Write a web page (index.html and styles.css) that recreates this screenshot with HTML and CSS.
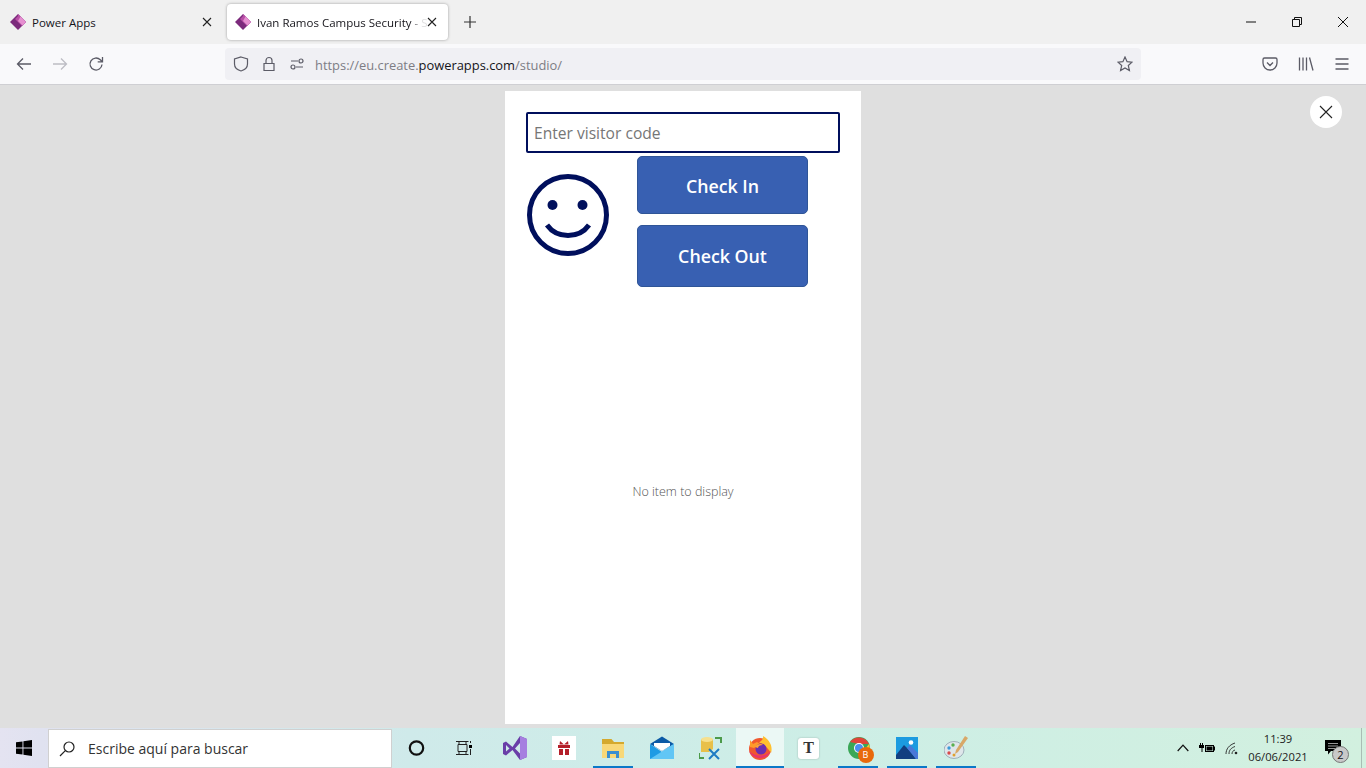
FILE: index.html
```html
<!DOCTYPE html>
<html lang="es">
<head>
  <meta charset="UTF-8">
  <title>Ivan Ramos Campus Security</title>
  <link rel="stylesheet" href="styles.css">
</head>
<body>
  <div class="tabstrip">
    <div class="tab">
      <svg class="favicon" viewBox="0 0 16 16"><path fill="#7c2a7c" d="M8 0 16 8 8 16 0 8z"/><path fill="#b84fa6" d="M8 0 16 8 12 12 5 5 8 2z"/><path fill="#e58fd0" d="M10.500 2.500 16 8 12.500 11.500 8 7z"/></svg>
      <span class="tab-title">Power Apps</span>
      <svg class="tab-close" viewBox="0 0 10 10"><path d="M1 1 9 9M9 1 1 9"/></svg>
    </div>
    <div class="tab active">
      <svg class="favicon" viewBox="0 0 16 16"><path fill="#7c2a7c" d="M8 0 16 8 8 16 0 8z"/><path fill="#b84fa6" d="M8 0 16 8 12 12 5 5 8 2z"/><path fill="#e58fd0" d="M10.500 2.500 16 8 12.500 11.500 8 7z"/></svg>
      <span class="tab-title">Ivan Ramos Campus Security - S</span>
      <svg class="tab-close" viewBox="0 0 10 10"><path d="M1 1 9 9M9 1 1 9"/></svg>
    </div>
    <svg class="new-tab" viewBox="0 0 12 12"><path d="M6 0V12M0 6H12"/></svg>
    <div class="window-controls">
      <div class="win-btn"><svg viewBox="0 0 10 10"><path d="M0 5H10"/></svg></div>
      <div class="win-btn"><svg viewBox="0 0 10 10"><path d="M.5 2.500H7.500V9.500H.5zM2.500 2.500V.5H9.500V7.500H7.500"/></svg></div>
      <div class="win-btn"><svg viewBox="0 0 10 10"><path d="M0 0 10 10M10 0 0 10"/></svg></div>
    </div>
  </div>

  <div class="toolbar">
    <svg class="tool first" viewBox="0 0 16 16"><path d="M15 8H1.500M7 2.500 1.500 8 7 13.500"/></svg>
    <svg class="tool off" viewBox="0 0 16 16"><path d="M1 8H14.500M9 2.500 14.500 8 9 13.500"/></svg>
    <svg class="tool" viewBox="0 0 16 16"><path d="M14 8.500A6 6 0 1 1 12.300 3.800L14 5.500M14.500 1V5.800H9.700"/></svg>
    <div class="urlbar">
      <svg class="url-icon" viewBox="0 0 16 16"><path d="M8 1 14.500 3V8C14.500 11.500 11.500 14 8 15 4.500 14 1.500 11.500 1.500 8V3z"/></svg>
      <svg class="url-icon" viewBox="0 0 16 16"><path d="M3 7.500H13V14.500H3zM5 7.500V4.500A3 3 0 0 1 11 4.500V7.500"/></svg>
      <svg class="url-icon" viewBox="0 0 16 16"><circle cx="12" cy="5" r="2"/><circle cx="4" cy="11" r="2"/><path d="M2 5H9M7 11H14"/></svg>
      <span class="url-text">https://eu.create.<b>powerapps.com</b>/studio/</span>
      <svg class="url-star" viewBox="0 0 16 16"><path d="M8 1 10.100 5.700 15 6.200 11.300 9.500 12.400 14.500 8 11.900 3.600 14.500 4.700 9.500 1 6.200 5.900 5.700z"/></svg>
    </div>
    <svg class="tool pocket" viewBox="0 0 16 16"><path d="M2.500 2H13.500A1.500 1.500 0 0 1 15 3.500V7A7 7 0 0 1 1 7V3.500A1.500 1.500 0 0 1 2.500 2zM5 6.500 8 9.500 11 6.500"/></svg>
    <svg class="tool" viewBox="0 0 16 16"><path d="M1.500 1.500V14.500M5 1.500V14.500M8.500 1.500V14.500M11.500 1.500 15 14.500"/></svg>
    <svg class="tool" viewBox="0 0 16 16"><path d="M1.500 3H14.500M1.500 8H14.500M1.500 13H14.500"/></svg>
  </div>

  <main class="stage">
    <div class="preview">
      <input class="visitor-code" type="text" placeholder="Enter visitor code">
      <div class="actions">
        <svg class="smiley" viewBox="0 0 82 82"><circle cx="41" cy="41" r="38.500"/><circle class="eye" cx="25.500" cy="31" r="5"/><circle class="eye" cx="55.500" cy="31" r="5"/><path d="M20 51C30 65 52 65 62 51"/></svg>
        <div class="buttons">
          <button class="btn check-in">Check In</button>
          <button class="btn check-out">Check Out</button>
        </div>
      </div>
      <div class="empty">No item to display</div>
    </div>
    <button class="close-preview"><svg viewBox="0 0 14 14"><path d="M1 1 13 13M13 1 1 13"/></svg></button>
  </main>

  <footer class="taskbar">
    <div class="start"><svg viewBox="0 0 16 16"><path fill="#000" d="M0 2.300 6.500 1.400V7.500H0zM7.400 1.300 16 0V7.500H7.400zM0 8.400H6.500V14.600L0 13.700zM7.400 8.400H16V16L7.400 14.700z"/></svg></div>
    <div class="search">
      <svg viewBox="0 0 16 16"><circle cx="10" cy="6" r="5"/><path d="M6.300 9.700 1 15"/></svg>
      <span>Escribe aquí para buscar</span>
    </div>
    <div class="slot"><svg class="ic18" viewBox="0 0 18 18"><circle cx="8.500" cy="9" r="6.700" fill="none" stroke="#111" stroke-width="2.200"/></svg></div>
    <div class="slot"><svg class="ic18 nudge" viewBox="0 0 18 18" fill="none" stroke="#222" stroke-width="1"><path d="M3 5.500H12V12.500H3zM1 2.500H13.500M1 15.500H13.500M4 13V16M11 13V16M4 2.500V5M11 2.500V5"/><path d="M15.500 2V4M15.500 10V16"/><path d="M15.500 6V9" stroke="#000" stroke-width="3"/></svg></div>
    <div class="slot"><svg class="ic24" viewBox="0 0 24 24"><path fill="#6a3ea8" d="M0 7 3 5.500 9.500 11 17 0 24 3V21L17 24 9.500 14 3 19.500 0 18zM3 9V15.500L6.500 12.500zM17 7 12 12.500 17 17.500z"/><path fill="#a67fe0" d="M17 0 24 3V21L17 24V17.500 7z"/></svg></div>
    <div class="slot"><svg class="ic24" viewBox="0 0 24 24"><path fill="#fff" d="M0 0H24V24H0z"/><path fill="#b4202a" d="M6 9H18V12H6zM7 13H11V19H7zM13 13H17V19H13zM8 5 12 8.500 16 5 16.500 8.500H7.500z"/></svg></div>
    <div class="slot running"><svg class="ic22" viewBox="0 0 22 22"><path fill="#d4a92e" d="M0 2H9.500L12 5H22V9H0z"/><path fill="#f8d878" d="M0 7H22V21H0z"/><path fill="#3a8fd0" d="M5 14H17V21H14V17H8V21H5z"/></svg></div>
    <div class="slot"><svg class="ic24" viewBox="0 0 24 24"><path fill="#0c5aa6" d="M0 8 12 .5 24 8 12 15z"/><path fill="#fff" d="M4 7H20V10L12 15 4 10z"/><path fill="#1f9be4" d="M0 8 12 16 24 8V23H0z"/><path fill="#62c6f5" d="M0 23 24 8V23z"/></svg></div>
    <div class="slot"><svg class="ic24" viewBox="0 0 24 24"><path fill="#e8c04a" d="M2 3H14V13L10 16H2z"/><ellipse cx="8" cy="3.500" rx="6" ry="2.500" fill="#f6e08e"/><path fill="none" stroke="#4c9a4a" stroke-width="2" d="M16 2H22V7M0 17V22H5"/><path fill="none" stroke="#1e7cc4" stroke-width="2" d="M10 13 20 23M20 13 10 23"/></svg></div>
    <div class="slot current"><svg class="ic24" viewBox="0 0 24 24"><circle cx="12" cy="13" r="11" fill="#f0582f"/><path fill="#ffc02e" d="M15 0C22 4 25 11 23 17 20 12 16 8 11 6.500 14 5 15.500 3 15 0z"/><path fill="#ff9a2a" d="M2 4 5 8 9 6 12 8 6 12 2 11z"/><circle cx="13" cy="13" r="5.500" fill="#6b2fb0"/><path fill="#ffa436" d="M7 11C9 8 13 7 15 9 12 9 10 10 10 12z"/><path fill="#e8346e" d="M1 15C5 24 19 25 23 15 18 21 7 21 1 15z"/></svg></div>
    <div class="slot"><span class="t-app">T</span></div>
    <div class="slot running"><span class="chrome"><svg class="ic22" viewBox="0 0 22 22"><circle cx="11" cy="11" r="11" fill="#3aa757"/><path fill="#e0443a" d="M2 5A11 11 0 0 1 21 7H11z"/><path fill="#f6c632" d="M21 7A11 11 0 0 1 13 22L17 12z"/><circle cx="11" cy="11" r="5" fill="#fff"/><circle cx="11" cy="11" r="4" fill="#4a8ef0"/></svg><b class="profile">B</b></span></div>
    <div class="slot running"><svg class="ic22" viewBox="0 0 22 22"><path fill="#1c9be0" d="M0 0H22V22H0z"/><path fill="#123f80" d="M0 22V18L8 8 14 14 20 22z"/><path fill="#4a78d8" d="M11 11 14 8 22 16V22H20z"/><circle cx="15" cy="5.500" r="2.300" fill="#fff"/></svg></div>
    <div class="slot running"><svg class="ic24" viewBox="0 0 24 24"><ellipse cx="10" cy="14" rx="10" ry="8.500" fill="#dfe6ea" stroke="#9fb0ba"/><circle cx="5" cy="12" r="1.700" fill="#3a9ad8"/><circle cx="9" cy="9" r="1.700" fill="#58b050"/><circle cx="5" cy="17" r="1.700" fill="#d84a4a"/><circle cx="10" cy="19" r="1.500" fill="#e0a030"/><path fill="#d8a868" d="M21 0 24 2 14 16 11 18 12 14z"/></svg></div>
    <div class="tray">
      <svg class="chevron" viewBox="0 0 12 8"><path d="M.7 7 6 1.200 11.300 7"/></svg>
      <svg class="battery" viewBox="0 0 16 12"><path fill="#000" d="M1 1H2V3H3V1H4V3H5V6H3.500V10H2.500V6H0V3H1zM6 3H15V4.500H16V8.500H15V10H6zM7 4V9H14V4z"/><path fill="#000" d="M7.500 4.500H13.500V8.500H7.500z"/></svg>
      <svg class="wifi" viewBox="0 0 14 14"><path d="M1 13C1 8 4 4 10 2M4 13C4 9 6 7 10 5.500M7 13C7 11 8 9.500 10 9"/><circle cx="11" cy="12" r="1.300" fill="#222" stroke="none"/></svg>
      <div class="clock"><div>11:39</div><div>06/06/2021</div></div>
      <div class="notify">
        <svg viewBox="0 0 16 15"><path fill="#000" d="M0 0H16V11H6L3 14.500V11H0z"/><path stroke="#fff" stroke-width=".6" d="M3 3.500H13M3 6H13M3 8.500H10"/></svg>
        <span class="notify-count">2</span>
      </div>
      <div class="show-desktop"></div>
    </div>
  </footer>
</body>
</html>
```

FILE: styles.css
```css
* {
  box-sizing: border-box;
}
html, body {
  margin: 0;
  height: 100%;
  overflow: hidden;
}
body {
  display: flex;
  flex-direction: column;
  font-family: "Open Sans", "Liberation Sans", sans-serif;
  color: #15141a;
  background-color: #dfdfdf;
}
svg {
  display: block;
  flex: none;
}

/* tabs */
.tabstrip {
  display: flex;
  align-items: center;
  height: 44px;
  background-color: #f0f0f0;
}
.tab {
  display: flex;
  align-items: center;
  height: 36px;
  font-size: 11.500px;
  white-space: nowrap;
}
.tab:first-child {
  width: 227px;
  padding: 0 15px 0 10px;
}
.tab.active {
  width: 221px;
  padding: 0 11px 0 8px;
  border-radius: 4px;
  background-color: #fff;
  box-shadow: 0 0 3px rgba(0, 0, 0, .35);
}
.favicon {
  width: 16px;
  height: 16px;
  margin-right: 6px;
}
.tab-title {
  flex: 1;
  min-width: 0;
}
.active .tab-title {
  -webkit-mask-image: linear-gradient(to right, #000 90%, rgba(0, 0, 0, .15) 97%);
  mask-image: linear-gradient(to right, #000 90%, rgba(0, 0, 0, .15) 97%);
}
.tab-close {
  width: 10px;
  height: 10px;
  fill: none;
  stroke: #222;
  stroke-width: 1.100;
}
.new-tab {
  width: 12px;
  height: 12px;
  margin-left: 16px;
  fill: none;
  stroke: #333;
  stroke-width: 1.200;
}
.window-controls {
  display: flex;
  margin-left: auto;
}
.win-btn {
  display: flex;
  justify-content: center;
  align-items: center;
  width: 46px;
  height: 44px;
}
.win-btn svg {
  width: 10px;
  height: 10px;
  fill: none;
  stroke: #111;
  stroke-width: 1;
}

/* toolbar */
.toolbar {
  display: flex;
  align-items: center;
  height: 41px;
  padding: 0 16px;
  background-color: #f9f9fb;
  border-bottom: 1px solid #cfcfd3;
}
.tool {
  width: 16px;
  height: 16px;
  margin-right: 20px;
  fill: none;
  stroke: #5b5b66;
  stroke-width: 1.300;
}
.tool.off {
  stroke: #bdbdc4;
}
.tool:last-child {
  margin-right: 0;
}
.tool.pocket {
  margin-left: 121px;
}
.urlbar {
  display: flex;
  align-items: center;
  width: 916px;
  height: 32px;
  margin-left: 101px;
  padding: 0 8px;
  border-radius: 4px;
  background-color: #f0f0f4;
}
.url-icon {
  width: 16px;
  height: 16px;
  margin-right: 12px;
  fill: none;
  stroke: #5b5b66;
  stroke-width: 1.200;
}
.url-text {
  margin: 1px 0 0 -2px;
  font-size: 12.900px;
  color: #7d7d85;
}
.url-text b {
  font-weight: 400;
  color: #15141a;
}
.url-star {
  width: 16px;
  height: 16px;
  margin-left: auto;
  fill: none;
  stroke: #5b5b66;
  stroke-width: 1.200;
}

/* canvas */
.stage {
  position: relative;
  flex: 1;
  display: flex;
  justify-content: center;
  padding: 6px 0 4px;
  min-height: 0;
}
.preview {
  display: flex;
  flex-direction: column;
  width: 356px;
  padding: 21px 21px 0;
  background-color: #fff;
}
.visitor-code {
  width: 314px;
  height: 41px;
  padding: 0 6px;
  border: 2px solid #000f5c;
  border-radius: 2px;
  outline: none;
  font: 15.600px "Open Sans", sans-serif;
}
.visitor-code::placeholder {
  color: #767676;
  opacity: 1;
}
.actions {
  display: flex;
  align-items: flex-start;
  margin-top: 3px;
}
.smiley {
  width: 82px;
  height: 82px;
  margin: 18px 28px 0 1px;
  fill: none;
  stroke: #000f5c;
  stroke-width: 5;
}
.smiley .eye {
  fill: #000f5c;
  stroke: none;
}
.buttons {
  display: flex;
  flex-direction: column;
  gap: 11px;
}
.btn {
  width: 171px;
  padding: 0;
  border: 1px solid #2f5597;
  border-radius: 5px;
  background-color: #3860b2;
  color: #fff;
  font: 600 17.800px "Open Sans", sans-serif;
}
.check-in {
  height: 58px;
  padding-top: 2px;
}
.check-out {
  height: 62px;
}
.empty {
  margin-top: 196px;
  text-align: center;
  font-size: 12.500px;
  font-weight: 300;
  color: #555;
}
.close-preview {
  position: absolute;
  top: 11px;
  right: 24px;
  display: flex;
  justify-content: center;
  align-items: center;
  width: 32px;
  height: 32px;
  padding: 0;
  border: 0;
  border-radius: 50%;
  background-color: #fff;
}
.close-preview svg {
  width: 14px;
  height: 14px;
  fill: none;
  stroke: #222;
  stroke-width: 1.100;
}

/* windows taskbar */
.taskbar {
  display: flex;
  align-items: stretch;
  height: 40px;
  background: linear-gradient(to right, #e4e3f1 0, #e0e2f0 3%, #cfeaea 30%, #cdeee6 60%, #d2f0df 100%);
}
.start {
  display: flex;
  justify-content: center;
  align-items: center;
  width: 48px;
}
.start svg {
  width: 16px;
  height: 16px;
}
.search {
  display: flex;
  align-items: center;
  width: 344px;
  margin-top: 1px;
  padding-left: 10px;
  border: 1px solid #d0d0d0;
  background-color: #fff;
  font-size: 14px;
  color: #333;
}
.search svg {
  width: 16px;
  height: 16px;
  margin-right: 13px;
  fill: none;
  stroke: #222;
  stroke-width: 1.200;
}
.slot {
  position: relative;
  display: flex;
  justify-content: center;
  align-items: center;
  width: 49px;
}
.running::after,
.current::after {
  content: "";
  position: absolute;
  bottom: 0;
  left: 5px;
  width: 40px;
  height: 2px;
  background-color: #0b78c8;
}
.current {
  width: 48px;
  margin-left: 1px;
  background-color: rgba(255, 255, 255, .6);
}
.current::after {
  left: 0;
  width: 48px;
}
.ic18 {
  width: 18px;
  height: 18px;
}
.nudge {
  margin-right: 3px;
}
.ic22 {
  width: 22px;
  height: 22px;
}
.ic24 {
  width: 24px;
  height: 24px;
}
.t-app {
  display: flex;
  justify-content: center;
  align-items: center;
  width: 21px;
  height: 21px;
  border-radius: 3px;
  background-color: #fff;
  box-shadow: 0 0 2px rgba(0, 0, 0, .25);
  font: 700 16px "Liberation Serif", serif;
  color: #333;
}
.chrome {
  position: relative;
  margin-left: 2px;
}
.profile {
  position: absolute;
  right: -4px;
  bottom: -4px;
  width: 16px;
  height: 16px;
  border-radius: 50%;
  background-color: #e8690c;
  color: #fff;
  font-size: 9px;
  font-weight: 400;
  line-height: 16px;
  text-align: center;
}
.tray {
  display: flex;
  align-items: center;
  margin-left: auto;
}
.chevron {
  width: 12px;
  height: 8px;
  fill: none;
  stroke: #111;
  stroke-width: 1.200;
}
.battery {
  width: 16px;
  height: 12px;
  margin-left: 10px;
}
.wifi {
  width: 14px;
  height: 14px;
  margin-left: 10px;
  fill: none;
  stroke: #222;
  stroke-width: .9;
}
.clock {
  width: 70px;
  margin-left: 4px;
  text-align: center;
  font-size: 11.200px;
  line-height: 18px;
  color: #222;
}
.notify {
  position: relative;
  width: 29px;
  height: 30px;
  margin: 0 12px 0 7px;
}
.notify svg {
  width: 16px;
  height: 15px;
  margin: 7px 0 0 5px;
}
.notify-count {
  position: absolute;
  right: 0;
  bottom: 0;
  width: 17px;
  height: 17px;
  border: 1px solid #777;
  border-radius: 50%;
  background-color: #c9c9c9;
  font-size: 11px;
  line-height: 15px;
  text-align: center;
}
.show-desktop {
  width: 5px;
  height: 100%;
  border-left: 1px solid #a9bdb4;
}
```
